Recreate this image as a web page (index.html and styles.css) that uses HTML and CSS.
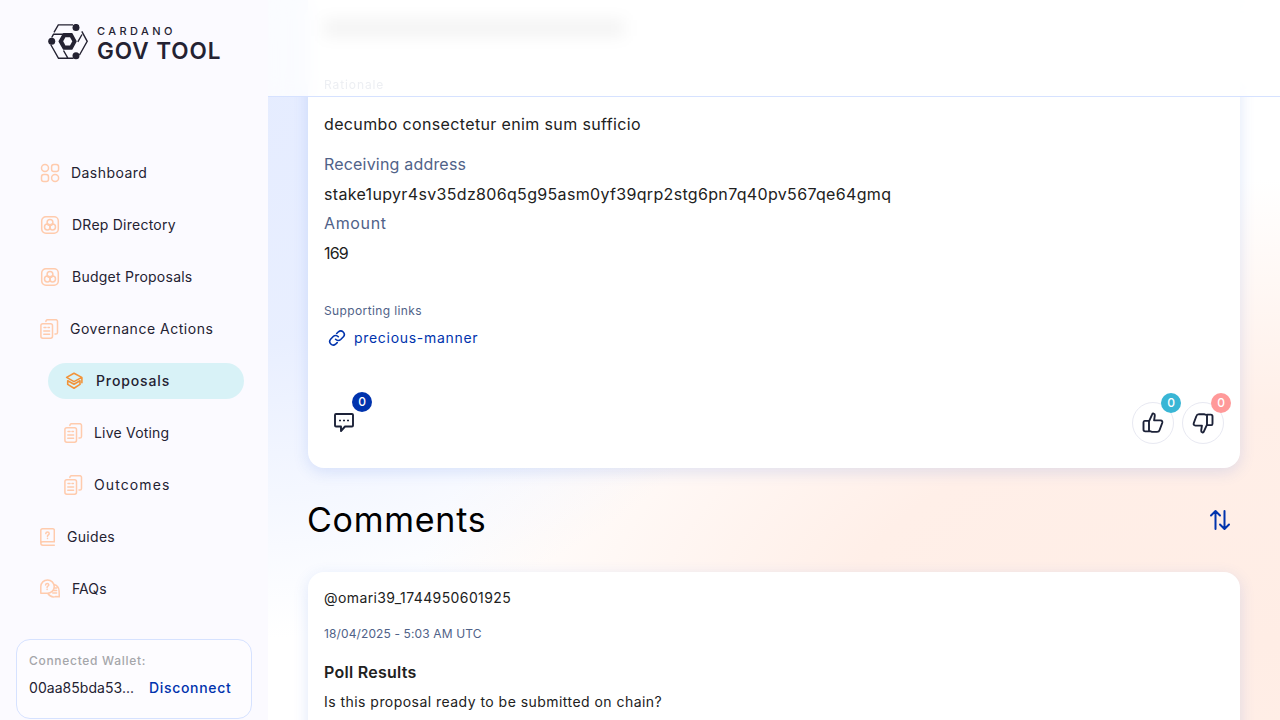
FILE: index.html
```html
<!DOCTYPE html>
<html lang="en">
<head>
<meta charset="utf-8">
<title>Cardano GovTool</title>
<link rel="stylesheet" href="styles.css">
</head>
<body>
<svg class="defs" width="0" height="0">
  <symbol id="i-drep" viewBox="0 0 20 20"><rect x="1.700" y="1.700" width="16.600" height="16.600" rx="4.200"/><circle cx="10" cy="7.400" r="2.900"/><circle cx="7.400" cy="12" r="2.900"/><circle cx="12.600" cy="12" r="2.900"/></symbol>
  <symbol id="i-docs" viewBox="0 0 20 20"><path d="M5.900 2.600V2.400A1.700 1.700 0 0 1 7.600.7h8.200a1.700 1.700 0 0 1 1.700 1.700v11a1.700 1.700 0 0 1-1.700 1.700h-.8"/><rect x=".9" y="4.700" width="11.600" height="14.500" rx="1.900"/><path d="M4 8.500h2M8 8.500h1.400M3.800 12h5.800M3.800 15.200h5.800"/></symbol>
</svg>
<div class="app">
  <aside class="sidebar">
    <div class="logo">
      <svg width="40" height="36" viewBox="0 0 40 36" fill="none" stroke="#242232" stroke-width="1.400">
        <path d="M6 8.300 10.300.900H25M33.800 7.300 39.200 17.300 31.500 31M34 10.500 29.800 17.800M25.500 34.300H10.500L2.700 20.500M3.700 13.500 5.500 10.300H15M15.500 26.500 20 34.300"/>
        <path d="M15.600 9.600H23.800L28 17.300 23.800 25.100H15.600L11.200 17.300Z" fill="#242232" stroke-linejoin="round"/>
        <path d="M17.400 13.200H22L24.300 17.300 22 21.400H17.400L15.200 17.300Z" fill="#fbfaff" stroke="none"/>
        <g fill="#242232" stroke="none"><circle cx="28" cy="3.400" r="3.500"/><circle cx="3.700" cy="17.300" r="3.500"/><circle cx="28" cy="31.700" r="3.500"/></g>
      </svg>
      <div class="logo-text"><span class="logo-small">CARDANO</span><span class="logo-big">GOV TOOL</span></div>
    </div>
    <nav class="nav">
      <a class="item"><svg class="ic" width="20" height="20" viewBox="0 0 20 20"><circle cx="5" cy="5" r="3.500"/><rect x="11.600" y="1.500" width="7" height="7" rx="2.300"/><rect x="1.500" y="11.600" width="7" height="7" rx="2.300"/><circle cx="15.100" cy="15.100" r="3.500"/></svg><span class="l-dash">Dashboard</span></a>
      <a class="item g12"><svg class="ic" width="20" height="20"><use href="#i-drep"/></svg><span class="l-drep">DRep Directory</span></a>
      <a class="item g12"><svg class="ic" width="20" height="20"><use href="#i-drep"/></svg><span class="l-budget">Budget Proposals</span></a>
      <a class="item g10"><svg class="ic" width="20" height="20"><use href="#i-docs"/></svg><span class="l-gov">Governance Actions</span></a>
      <a class="item sub active"><svg class="ic" width="20" height="20" viewBox="0 0 20 20"><path d="M10 2.200 17.800 6.400 10 10.600 2.600 6.400ZM17.900 6.600V11.800M3.700 9.800 10 13.300 16 9.800M3.700 9.800V13.400L10 17.200 16 13.400V9.800"/></svg><span class="l-prop">Proposals</span></a>
      <a class="item sub g10"><svg class="ic" width="20" height="20"><use href="#i-docs"/></svg><span class="l-live">Live Voting</span></a>
      <a class="item sub g10"><svg class="ic" width="20" height="20"><use href="#i-docs"/></svg><span class="l-out">Outcomes</span></a>
      <a class="item g12"><svg class="ic" width="15" height="18" viewBox="0 0 15 18"><path d="M14.300 13.400V2.200Q14.300.800 12.900.800H2.600Q.800.800.800 2.600V15Q.800 17.200 2.800 17.200H14.300M14.300 13.800H2.800Q.800 13.800.800 15.300M5.800 5.600Q5.900 4.100 7.500 4.100T9.200 5.600Q9.200 6.500 8.300 7T7.500 8.300M7.500 10.200V10.500"/></svg><span class="l-guides">Guides</span></a>
      <a class="item g12"><svg class="ic" width="20" height="20" viewBox="0 0 20 20"><path d="M.800 14.300V7.600A6.700 6.700 0 1 1 7.400 14.300ZM14 5.500Q19.200 7 19.100 12.300L19.300 17.800 15.500 17.600Q11 19 7.900 14.500M14.800 9H16.600M14 11.500H16.600M12.800 14H16.600M5.600 5.900Q5.800 4.400 7.200 4.400T8.800 5.900Q8.700 6.800 7.900 7.200T7.100 8.500M7.100 10.300V10.600"/></svg><span class="l-faq">FAQs</span></a>
    </nav>
    <section class="wallet">
      <div class="wallet-label">Connected Wallet:</div>
      <div class="wallet-row"><span class="wallet-id">00aa85bda53...</span><a class="disconnect">Disconnect</a></div>
    </section>
  </aside>
  <main class="main">
    <header class="topbar"><div class="haze"></div><span class="faint">Rationale</span></header>
    <article class="card proposal">
      <p class="body l-dec">decumbo consectetur enim sum sufficio</p>
      <div class="fields">
        <p class="label l-rec">Receiving address</p>
        <p class="body l-stake">stake1upyr4sv35dz806q5g95asm0yf39qrp2stg6pn7q40pv567qe64gmq</p>
        <p class="label l-amt">Amount</p>
        <p class="body l-num">169</p>
      </div>
      <p class="small l-sup">Supporting links</p>
      <a class="link"><svg width="18" height="18" viewBox="0 0 18 18"><path d="M7.600 10.300A3.600 3.600 0 0 0 12.700 10.500L15.400 7.800A3.550 3.550 0 0 0 10.400 2.800L8.700 4.500M10.300 7.700A3.600 3.600 0 0 0 5.200 7.500L2.600 10.200A3.550 3.550 0 0 0 7.600 15.200L9.200 13.600"/></svg><span>precious-manner</span></a>
      <footer class="actions">
        <button class="act bare"><svg width="24" height="24" viewBox="0 0 24 24"><path d="M4 3H20Q21 3 21 4V14.500Q21 15.500 20 15.500H13L9 20V15.500H4Q3 15.500 3 14.500V4Q3 3 4 3Z"/><path class="dots" d="M7 9.500h2M11 9.500h2M15 9.500h2"/></svg><span class="badge b-blue">0</span></button>
        <div class="votes">
          <button class="act ring"><svg width="24" height="24" viewBox="0 0 24 24"><path d="M8 10.300 11.200 3.400Q11.600 2.300 12.700 2.700 14 3.100 13.800 4.600L13.100 9.400H19.500Q22 9.600 21.200 12L18.600 19Q18 20.900 16 20.900L10.500 20.700 8 19.900M3.600 9.900H8V20.400H4.200Q2.500 20.400 2.500 18.600V11.500Q2.500 9.900 3.600 9.900Z"/></svg><span class="badge b-cyan">0</span></button>
          <button class="act ring"><svg width="24" height="24" viewBox="0 0 24 24"><g transform="rotate(180 12 12)"><path d="M8 10.300 11.200 3.400Q11.600 2.300 12.700 2.700 14 3.100 13.800 4.600L13.100 9.400H19.500Q22 9.600 21.200 12L18.600 19Q18 20.900 16 20.900L10.500 20.700 8 19.900M3.600 9.900H8V20.400H4.200Q2.500 20.400 2.500 18.600V11.500Q2.500 9.900 3.600 9.900Z"/></g></svg><span class="badge b-pink">0</span></button>
        </div>
      </footer>
    </article>
    <div class="heading"><h2>Comments</h2><svg width="24" height="24" viewBox="0 0 24 24"><path d="M7.500 21V3.500M3 7.500 7.500 3 12 7.500M16.500 3V20.500M12 16.500 16.500 21 21 16.500"/></svg></div>
    <article class="card comment">
      <p class="user">@omari39_1744950601925</p>
      <p class="small date">18/04/2025 - 5:03 AM UTC</p>
      <h3>Poll Results</h3>
      <p class="question">Is this proposal ready to be submitted on chain?</p>
    </article>
  </main>
</div>
</body>
</html>
```

FILE: styles.css
```css
* { box-sizing: border-box; }
body { margin: 0; font-family: Inter, "Open Sans", sans-serif; color: #212121; }
p, h2, h3 { margin: 0; white-space: nowrap; }
svg { flex: none; fill: none; }
.defs { position: absolute; }
.app { display: flex; width: 1280px; height: 720px; overflow: hidden; }

.sidebar { width: 268px; flex: none; background: #fbfaff; padding: 24px 16px 0; display: flex; flex-direction: column; color: #242232; }
.logo { display: flex; gap: 9px; padding-left: 32px; height: 131px; flex: none; }
.logo-text { display: flex; flex-direction: column; white-space: nowrap; }
.logo-small { font-size: 11px; line-height: 14px; font-weight: 500; letter-spacing: 3.450px; }
.logo-big { font-size: 22.500px; line-height: 25px; font-weight: 600; letter-spacing: .95px; }
.nav { display: flex; flex-direction: column; gap: 16px; padding: 0 8px 0 24px; }
.item { height: 36px; display: flex; align-items: center; gap: 11px; font-size: 14px; white-space: nowrap; letter-spacing: .1px; }
.item span { padding-bottom: 1px; }
.item.g12 { gap: 12px; }
.item.g10 { gap: 10px; }
.l-dash { letter-spacing: .45px; }
.l-drep, .l-budget { letter-spacing: .24px; }
.l-gov { letter-spacing: .52px; }
.l-prop { letter-spacing: .88px; }
.l-live { letter-spacing: .2px; }
.l-out { letter-spacing: 1.100px; }
.l-guides { letter-spacing: .3px; }
.ic { stroke: #ffcbad; stroke-width: 1.500; stroke-linecap: round; stroke-linejoin: round; }
.sub { padding-left: 24px; }
.active { margin-left: 8px; padding-left: 16px; gap: 12px; border-radius: 18px; background: #d8f2f7; font-weight: 500; }
.active .ic { stroke: #f29339; stroke-width: 1.600; }
.wallet { margin-top: 32px; height: 80px; flex: none; border: 1px solid #d6e2ff; border-radius: 14px; background: #fdfcff; padding: 12px; }
.wallet-label { font-size: 12px; line-height: 18px; font-weight: 500; color: #a5a6aa; letter-spacing: .7px; }
.wallet-row { display: flex; gap: 15px; align-items: center; margin-top: 7px; font-size: 14px; line-height: 21px; white-space: nowrap; }
.wallet-id { width: 105px; letter-spacing: .05px; }
.disconnect { color: #0033ad; font-weight: 500; letter-spacing: .68px; }

.main { position: relative; flex: 1; padding: 0 40px; display: flex; flex-direction: column; background:
  radial-gradient(ellipse 620px 540px at -40px 100px, #e5ecff 0%, rgba(230,237,255,.9) 45%, rgba(240,244,255,0) 100%),
  radial-gradient(ellipse 860px 460px at 1000px 640px, #ffede5 0%, #ffefe8 50%, rgba(255,246,241,0) 100%),
  #fff; }
.topbar { position: absolute; z-index: 2; left: 0; top: 0; width: 100%; height: 97px; border-bottom: 1px solid #d6e2ff; background: rgba(255,255,255,.8); backdrop-filter: blur(10px); padding: 20px 56px 0; }
.haze { width: 300px; height: 16px; background: rgba(0,0,0,.05); filter: blur(8px); }
.faint { display: block; margin-top: 40px; font-size: 12px; line-height: 18px; color: #edeff3; letter-spacing: .9px; }
.card { flex: none; background: #fff; padding: 0 16px; box-shadow: 0 4px 15px rgba(47,98,220,.15); }
.proposal { height: 468px; border-radius: 0 0 16px 16px; padding-top: 112px; }
.body, .label { font-size: 16px; line-height: 24px; }
.label, .small { color: #506288; }
.small { font-size: 12px; line-height: 18px; }
.fields { display: flex; flex-direction: column; gap: 5.700px; margin-top: 16px; }
.l-dec { letter-spacing: .36px; }
.l-rec { letter-spacing: .19px; }
.l-stake { letter-spacing: .33px; }
.l-amt { letter-spacing: .65px; }
.l-num { letter-spacing: -.800px; }
.l-sup { margin-top: 37px; letter-spacing: .38px; }
.link { display: flex; align-items: center; gap: 8px; padding-left: 4px; margin-top: 8px; color: #0033ad; font-size: 14px; line-height: 20px; letter-spacing: .7px; }
.link svg { stroke: #0033ad; stroke-width: 1.600; stroke-linecap: round; }
.actions { display: flex; justify-content: space-between; align-items: center; margin-top: 54px; }
.votes { display: flex; gap: 8px; }
.act { position: relative; width: 42px; height: 42px; border: 0; background: none; padding: 0; display: flex; align-items: center; justify-content: center; }
.bare { width: 40px; }
.act svg { stroke: #1c2238; stroke-width: 1.900; stroke-linejoin: round; }
.act .dots { stroke-width: 1.600; }
.ring { border: 1px solid #e8e9f2; border-radius: 50%; }
.badge { position: absolute; right: -8px; top: -10px; width: 20px; height: 20px; border-radius: 50%; color: #fff; font: 500 12px/20px Inter, sans-serif; text-align: center; }
.b-blue { background: #0033ad; }
.b-cyan { background: #39b6d5; }
.b-pink { background: #ff9999; }
.heading { height: 104px; flex: none; display: flex; align-items: center; justify-content: space-between; padding-right: 8px; }
.heading h2 { font-size: 34px; line-height: 42px; font-weight: 400; color: #000; letter-spacing: .75px; margin-left: -1px; }
.heading svg { stroke: #0033ad; stroke-width: 2; stroke-linecap: round; stroke-linejoin: round; }
.comment { height: 200px; border-radius: 16px 16px 0 0; padding-top: 15px; }
.user, .question { font-size: 14px; line-height: 22px; }
.user { letter-spacing: .4px; }
.date { margin-top: 16px; letter-spacing: .12px; }
.comment h3 { font-size: 16px; line-height: 24px; margin-top: 17px; font-weight: 600; letter-spacing: .27px; }
.question { margin-top: 7px; letter-spacing: .46px; }
```
